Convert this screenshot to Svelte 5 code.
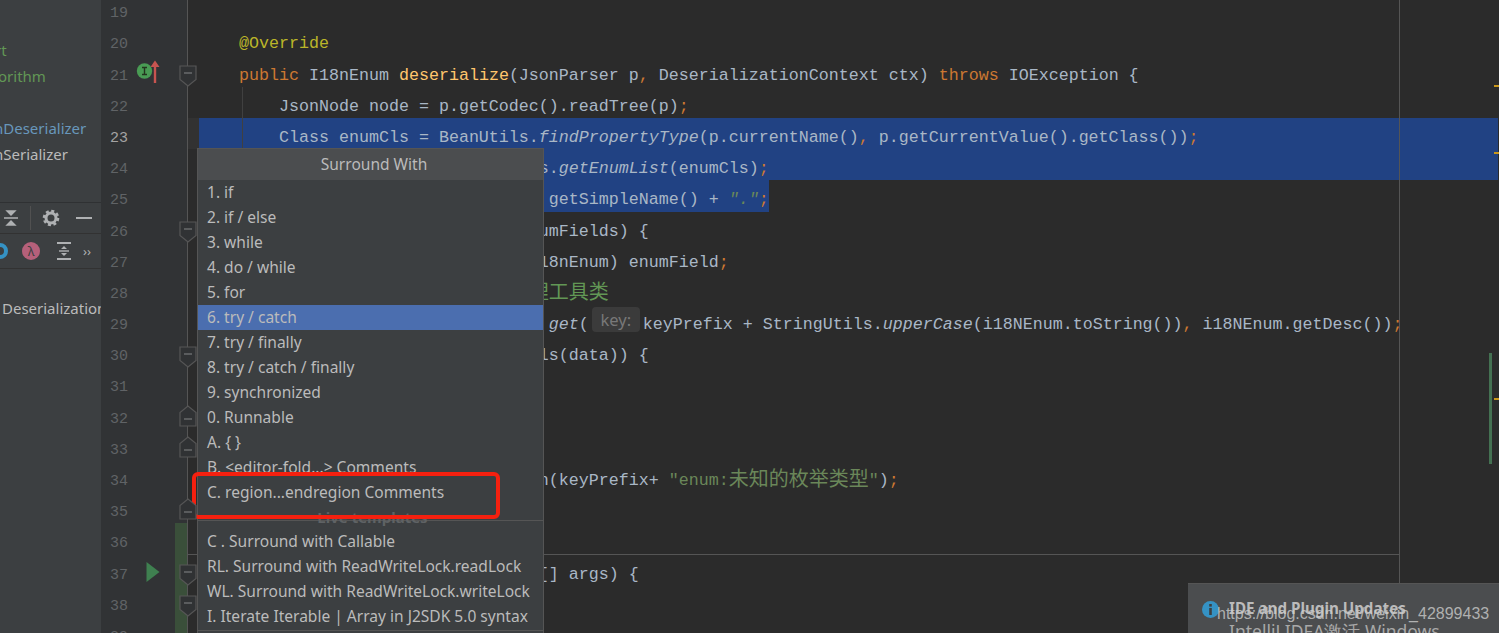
<script>
  const sp = (n) => ' '.repeat(n);
  const lines = [
    { n: 19, code: [] },
    { n: 20, code: [[sp(4)], ['@Override', 'ann']] },
    { n: 21, fold: 'open', code: [[sp(4)], ['public ', 'kw'], ['I18nEnum '], ['deserialize', 'fn'], ['(JsonParser p'], [', ', 'kw'], ['DeserializationContext ctx) '], ['throws ', 'kw'], ['IOException {']] },
    { n: 22, code: [[sp(8) + 'JsonNode node = p.getCodec().readTree(p)'], [';', 'kw']] },
    { n: 23, sel: true, current: true, code: [[sp(8) + 'Class enumCls = BeanUtils.'], ['findPropertyType', 'it'], ['(p.currentName()'], [', ', 'kw'], ['p.getCurrentValue().getClass())'], [';', 'kw']] },
    { n: 24, sel: true, code: [[sp(34) + 's.'], ['getEnumList', 'it'], ['(enumCls)'], [';', 'kw']] },
    { n: 25, part: true, code: [[sp(35) + 'getSimpleName() + '], ['"."', 'str it'], [';', 'kw']] },
    { n: 26, fold: 'open', code: [[sp(34) + 'umFields) {']] },
    { n: 27, code: [[sp(34) + '18nEnum) enumField'], [';', 'kw']] },
    { n: 28, code: [[sp(33)], ['理工具类', 'cmt cjk']] },
    { n: 29, hint: true, code: [[sp(35)], ['get', 'it'], ['(']], after: [['keyPrefix + StringUtils.'], ['upperCase', 'it'], ['(i18NEnum.toString())'], [', ', 'kw'], ['i18NEnum.getDesc())'], [';', 'kw']] },
    { n: 30, fold: 'open', code: [[sp(34) + 'ls(data)) {']] },
    { n: 31, code: [] },
    { n: 32, fold: 'close', code: [] },
    { n: 33, fold: 'close', code: [] },
    { n: 34, code: [[sp(34) + 'n(keyPrefix+ '], ['"enum:', 'str'], ['未知的枚举类型', 'str cjk'], ['"', 'str'], [')'], [';', 'kw']] },
    { n: 35, fold: 'close', code: [] },
    { n: 36, added: true, code: [] },
    { n: 37, added: true, fold: 'open', run: true, code: [[sp(34) + '[] args) {']] },
    { n: 38, added: true, fold: 'open', code: [] },
    { n: 39, added: true, code: [] }
  ];
  const items = ['1. if', '2. if / else', '3. while', '4. do / while', '5. for', '6. try / catch', '7. try / finally', '8. try / catch / finally', '9. synchronized', '0. Runnable', 'A. { }', 'B. <editor-fold...> Comments', 'C. region...endregion Comments'];
  const templates = ['C . Surround with Callable', 'RL. Surround with ReadWriteLock.readLock', 'WL. Surround with ReadWriteLock.writeLock', 'I. Iterate Iterable | Array in J2SDK 5.0 syntax'];
</script>

<div class="root">
  <aside class="side">
    <div class="tree">
      <div class="node green"><span class="cut c1">rt</span></div>
      <div class="node green"><span class="cut c2">orithm</span></div>
      <div class="node"></div>
      <div class="node blue"><span class="cut">nDeserializer</span></div>
      <div class="node"><span class="cut">nSerializer</span></div>
    </div>
    <div class="bar bar1">
      <svg class="ic" width="18" height="18" viewBox="0 0 18 18"><path d="M2 9h14M5 2h8L9 6zM5 16h8L9 12z" fill="#afb1b3" stroke="#afb1b3" stroke-width="1.4"/></svg>
      <span class="vsep"></span>
      <svg class="gear" width="18" height="18" viewBox="0 0 18 18"><circle cx="9" cy="9" r="5" fill="none" stroke="#afb1b3" stroke-width="3"/><circle cx="9" cy="9" r="7" fill="none" stroke="#afb1b3" stroke-width="2.6" stroke-dasharray="3 2.5"/></svg>
      <span class="minus"></span>
    </div>
    <div class="bar bar2">
      <span class="ring"></span>
      <span class="lambda">λ</span>
      <svg class="ic2" width="18" height="20" viewBox="0 0 18 20"><path d="M2 2h14M2 18h14" stroke="#afb1b3" stroke-width="2"/><path d="M6 8l3-3 3 3zM6 12l3 3 3-3z" fill="#afb1b3"/><path d="M4 10h10" stroke="#afb1b3" stroke-width="1.4"/></svg>
      <span class="more">››</span>
    </div>
    <div class="node panel"><span>Deserialization</span></div>
  </aside>

  <main class="editor">
    {#each lines as l}
      <div class="row">
        <div class="gutter" class:cur={l.current}>
          <span class="num">{l.n}</span>
          {#if l.n === 21}
            <svg class="mark" width="30" height="30" viewBox="0 0 30 30"><circle cx="8.5" cy="15" r="7.7" fill="#499c54"/><path d="M6 11.5h5M6 18.5h5M8.5 11.5v7" stroke="#24351f" stroke-width="1.4"/><path d="M19 27V10" stroke="#c75450" stroke-width="2.4"/><path d="M14.5 11L19 4.5 23.5 11z" fill="#c75450"/></svg>
          {/if}
          {#if l.run}
            <svg class="play" width="14" height="22" viewBox="0 0 14 22"><path d="M0.5 1L13.5 11 0.5 21z" fill="#3f8050"/></svg>
          {/if}
          {#if l.added}<span class="added"></span>{/if}
          {#if l.fold}
            <svg class="fold" class:up={l.fold === 'close'} width="18" height="22" viewBox="0 0 18 22"><path d="M1 1H17V14.5L9 21 1 14.5Z" fill="#303234" stroke="#565656" stroke-width="1.2"/><path d="M5 8H13" stroke="#77797b" stroke-width="1.2"/></svg>
          {/if}
        </div>
        <div class="caret" class:curbg={l.current}></div>
        <div class="code" class:sel={l.sel}>
          <span class="text" class:partsel={l.part}>{#each l.code as [t, c]}<span class={c}>{t}</span>{/each}{#if l.hint}<span class="hint">key:</span>{/if}{#if l.after}{#each l.after as [t, c]}<span class={c}>{t}</span>{/each}{/if}</span>
        </div>
      </div>
    {/each}

    <span class="guide"></span>
    <span class="margin"></span>
    <span class="method"></span>
    <span class="tick t1"></span>
    <span class="tick t2"></span>
    <span class="tick t3"></span>
    <span class="stripe"></span>
  </main>

  <section class="popup">
    <header class="title">Surround With</header>
    {#each items as it, i}
      <div class="item" class:active={i === 5}>{it}</div>
    {/each}
    <div class="group"><span>Live templates</span></div>
    {#each templates as it}
      <div class="item">{it}</div>
    {/each}
    <div class="end"></div>
  </section>

  <div class="redbox"></div>

  <section class="notice">
    <svg class="info" width="17" height="17" viewBox="0 0 17 17"><circle cx="8.5" cy="8.5" r="8.5" fill="#3592c4"/><rect x="7.2" y="3" width="2.6" height="2.6" fill="#3c3f41"/><rect x="7.2" y="7" width="2.6" height="7" fill="#3c3f41"/></svg>
    <div class="ntext">
      <div class="ntitle">IDE and Plugin Updates</div>
      <div class="nbody">IntelliJ IDEA激活 Windows</div>
    </div>
    <span class="water">https://blog.csdn.net/weixin_42899433</span>
  </section>
</div>

<style>
  :global(body) { margin: 0; background: #2b2b2b; overflow: hidden; }
  .root { position: relative; display: flex; width: 1499px; height: 633px; overflow: hidden; font-family: "Noto Sans", sans-serif; }

  .side { width: 101px; flex: none; background: #3c3f41; color: #bbbbbb; font-size: 15px; overflow: hidden; }
  .tree { height: 165px; padding-top: 37px; }
  .node { height: 26px; line-height: 26px; white-space: nowrap; }
  .green { color: #629755; }
  .blue { color: #6897bb; }
  .cut { margin-left: -6px; display: inline-block; }
  .c1 { margin-left: -5px; }
  .c2 { margin-left: -2px; }
  .bar { position: relative; display: flex; align-items: center; box-sizing: border-box; border-top: 1px solid #2f3133; }
  .bar1 { height: 31px; }
  .bar2 { height: 36px; border-top-color: #323232; border-bottom: 1px solid #323232; }
  .ic { margin-left: 2px; }
  .vsep { width: 1px; height: 24px; background: #515151; margin-left: 10px; }
  .gear { margin-left: 11px; }
  .minus { width: 16px; height: 2px; background: #afb1b3; margin-left: 16px; }
  .ring { width: 16px; height: 16px; border: 4px solid #3592c4; border-radius: 50%; margin-left: -8px; box-sizing: border-box; flex: none; background: #3c3f41; }
  .lambda { width: 18px; height: 18px; border-radius: 50%; background: #b5607a; color: #3c3f41; font: 13px/18px "Noto Sans", sans-serif; text-align: center; margin-left: 14px; flex: none; }
  .ic2 { margin-left: 15px; flex: none; }
  .more { font-size: 13px; margin-left: 10px; color: #afb1b3; }
  .panel { padding-left: 2px; margin-top: 26px; overflow: hidden; }

  .editor { position: relative; flex: 1; min-width: 0; margin-top: -6.8px; background: #2b2b2b; font-family: "Liberation Mono", monospace; font-size: 16.67px; color: #a9b7c6; }
  .row { display: flex; height: 31.2px; }
  .gutter { position: relative; width: 87px; flex: none; box-sizing: border-box; padding-left: 9px; background: #313335; border-right: 1px solid #555555; color: #606366; font-size: 15px; line-height: 41px; }
  .gutter.cur { color: #a4a3a3; }
  .mark { position: absolute; left: 35px; top: 0.4px; }
  .play { position: absolute; left: 45px; top: 6px; }
  .added { position: absolute; left: 74px; right: 0; top: 0; bottom: -0.2px; background: #3a4f3a; }
  .fold { position: absolute; left: 77.5px; top: 9.4px; z-index: 1; }
  .fold.up { transform: rotate(180deg) scaleX(-1); top: 6px; }
  .caret { width: 11px; flex: none; }
  .curbg { background: #323232; }
  .code { width: 1299px; flex: none; white-space: pre; line-height: 40px; }
  .sel { background: #214283; }
  .text { display: inline-block; height: 31.2px; vertical-align: top; }
  .partsel { background: #214283; }
  .kw { color: #cc7832; }
  .ann { color: #bbb529; }
  .fn { color: #ffc66d; }
  .it { font-style: italic; }
  .str { color: #6a8759; }
  .cmt { color: #629755; }
  .cjk { font-family: "Noto Sans CJK SC", sans-serif; font-size: 20px; line-height: 1; position: relative; top: 1px; }
  .hint { display: inline-block; width: 48px; height: 25px; margin: 0 3px; vertical-align: 3px; text-align: center; background: #3b3b3b; border-radius: 4px; color: #787878; font: 16.5px/25px "Noto Sans", sans-serif; }

  .guide { position: absolute; left: 141px; top: 93.8px; width: 1px; height: 62px; background: #404040; }
  .margin { position: absolute; left: 1298px; top: 0; bottom: 0; width: 1px; background: #555555; }
  .method { position: absolute; left: 87px; width: 1211px; top: 560.8px; height: 1px; background: #555555; }
  .tick { position: absolute; left: 1393px; width: 5px; height: 2px; background: #c9971c; }
  .t1 { top: 91.8px; }
  .t2 { top: 158.8px; }
  .t3 { top: 404.8px; }
  .stripe { position: absolute; left: 1388px; width: 3px; top: 359.8px; height: 111px; background: #447152; }

  .popup { position: absolute; left: 197px; top: 148px; width: 345px; height: 520px; background: #3c3f41; border: 1px solid #555555; color: #bbbbbb; font-size: 15.55px; }
  .title { height: 30.5px; line-height: 30px; background: #4b4d4f; text-align: center; padding-left: 7px; box-sizing: border-box; }
  .item { height: 25px; line-height: 25px; padding-left: 9px; white-space: nowrap; overflow: hidden; }
  .active { background: #4b6eaf; }
  .group { position: relative; height: 24px; text-align: center; font-weight: 700; color: #5f6264; line-height: 25px; font-size: 15px; }
  .group::before { content: ""; position: absolute; left: 0; right: 0; top: 15px; height: 1px; background: #555555; }
  .group span { position: relative; left: 2px; }
  .end { height: 1px; margin-top: 1.5px; background: #555555; }

  .redbox { position: absolute; left: 191.5px; top: 472px; width: 308px; height: 47px; box-sizing: border-box; border: 4px solid #f5200f; border-radius: 6px; }

  .notice { position: absolute; left: 1188px; top: 583px; right: 0; bottom: 0; display: flex; box-sizing: border-box; padding: 16px 0 0 14px; background: #4b4d4f; border-top: 1px solid #555555; overflow: hidden; }
  .info { flex: none; margin-right: 10px; margin-top: 1px; }
  .ntext { color: #bbbbbb; font-size: 15.2px; white-space: nowrap; }
  .ntitle { font-weight: 700; line-height: 16px; }
  .nbody { font-size: 17.5px; line-height: 20px; margin-top: 5px; color: #a8a8a8; }
  .water { position: absolute; left: 29px; top: 19px; color: rgba(205, 205, 205, 0.78); font: 16px/22px "Liberation Sans", sans-serif; white-space: nowrap; }
</style>
